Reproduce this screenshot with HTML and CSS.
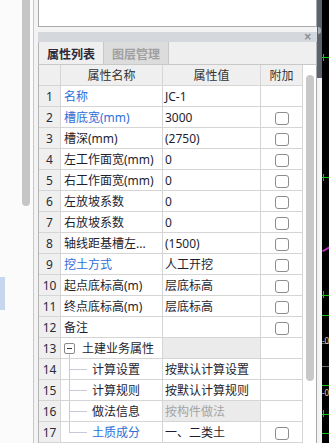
FILE: index.html
```html
<!DOCTYPE html>
<html lang="zh-CN">

<head>
  <meta charset="UTF-8">
  <meta name="viewport" content="width=device-width, initial-scale=1">
  <title>属性列表</title>
  <link rel="stylesheet" href="styles.css">
</head>

<body>

  <div class="sidebar">
    <div class="side-thumb"></div>
    <div class="side-mark"></div>
  </div>

  <div class="panel">
    <div class="preview"></div>
    <div class="titlebar"><span class="close">×</span></div>
    <div class="tabs">
      <div class="tab">属性列表</div>
      <div class="tab inactive">图层管理</div>
    </div>

    <div class="grid">
      <table class="props">
        <thead>
          <tr>
            <th class="c-num"></th>
            <th class="c-name">属性名称</th>
            <th class="c-val">属性值</th>
            <th class="c-extra">附加</th>
          </tr>
        </thead>
        <tbody>
          <tr><td class="num">1</td><td class="blue">名称</td><td class="val">JC-1</td><td class="extra"></td></tr>
          <tr><td class="num">2</td><td class="blue">槽底宽(mm)</td><td class="val">3000</td><td class="extra"><span class="check"></span></td></tr>
          <tr><td class="num">3</td><td>槽深(mm)</td><td class="val">(2750)</td><td class="extra"><span class="check"></span></td></tr>
          <tr><td class="num">4</td><td>左工作面宽(mm)</td><td class="val">0</td><td class="extra"><span class="check"></span></td></tr>
          <tr><td class="num">5</td><td>右工作面宽(mm)</td><td class="val">0</td><td class="extra"><span class="check"></span></td></tr>
          <tr><td class="num">6</td><td>左放坡系数</td><td class="val">0</td><td class="extra"><span class="check"></span></td></tr>
          <tr><td class="num">7</td><td>右放坡系数</td><td class="val">0</td><td class="extra"><span class="check"></span></td></tr>
          <tr><td class="num">8</td><td>轴线距基槽左...</td><td class="val">(1500)</td><td class="extra"><span class="check"></span></td></tr>
          <tr><td class="num">9</td><td class="blue">挖土方式</td><td class="val">人工开挖</td><td class="extra"><span class="check"></span></td></tr>
          <tr><td class="num">10</td><td>起点底标高(m)</td><td class="val">层底标高</td><td class="extra"><span class="check"></span></td></tr>
          <tr><td class="num">11</td><td>终点底标高(m)</td><td class="val">层底标高</td><td class="extra"><span class="check"></span></td></tr>
          <tr><td class="num">12</td><td>备注</td><td class="val"></td><td class="extra"><span class="check"></span></td></tr>
          <tr>
            <td class="num">13</td>
            <td class="tree"><div class="node group"><span class="toggle"><span class="minus"></span></span>土建业务属性</div></td>
            <td class="val shaded"></td>
            <td class="extra"></td>
          </tr>
          <tr>
            <td class="num">14</td>
            <td class="tree"><div class="node child">计算设置</div></td>
            <td class="val">按默认计算设置</td>
            <td class="extra"></td>
          </tr>
          <tr>
            <td class="num">15</td>
            <td class="tree"><div class="node child">计算规则</div></td>
            <td class="val">按默认计算规则</td>
            <td class="extra"></td>
          </tr>
          <tr>
            <td class="num">16</td>
            <td class="tree"><div class="node child">做法信息</div></td>
            <td class="val shaded muted">按构件做法</td>
            <td class="extra"></td>
          </tr>
          <tr>
            <td class="num">17</td>
            <td class="tree"><div class="node child last blue">土质成分</div></td>
            <td class="val">一、二类土</td>
            <td class="extra"><span class="check"></span></td>
          </tr>
        </tbody>
      </table>
      <div class="scrollbar"><div class="thumb"></div></div>
    </div>
  </div>

  <div class="splitter">
    <div class="splitter-top"><span class="grip"></span></div>
  </div>

  <!-- drawing area, only a sliver is visible -->
  <div class="canvas">
    <i class="line green l1"></i>
    <i class="tick green t1"></i>
    <i class="line green l2"></i>
    <i class="tick green t2"></i>
    <i class="slash"></i>
    <i class="line green l3"></i>
    <i class="tick green t3"></i>
    <i class="line green l4"></i>
    <i class="line gray l5"></i>
    <span class="label lb1">-0</span>
    <i class="line gray l6"></i>
    <i class="line green l7"></i>
    <span class="label lb2">-0</span>
    <i class="line green l8"></i>
    <i class="tick green t4"></i>
    <i class="line green l9"></i>
  </div>

</body>

</html>
```

FILE: styles.css
```css
* {
  box-sizing: border-box;
}

body {
  margin: 0;
  width: 329px;
  height: 443px;
  overflow: hidden;
  display: flex;
  background: #f3f3f3;
  font-family: "Noto Sans", "Noto Sans CJK SC", sans-serif;
  font-size: 12px;
  color: #1e1e30;
}

/* left list strip */
.sidebar {
  flex: none;
  width: 34px;
  background: #fbfbfb;
  border-right: 1px solid #c9c9c9;
}

.side-thumb {
  margin-left: 22px;
  width: 8px;
  height: 206px;
  background: #c6c6c6;
  border-radius: 0 0 4px 4px;
}

.side-mark {
  margin-top: 71px;
  width: 5px;
  height: 33px;
  background: #c5d6ee;
}

/* property panel */
.panel {
  flex: none;
  width: 279px;
  margin-left: 4px;
  display: flex;
  flex-direction: column;
}

.preview {
  height: 27px;
  background: #fff;
  border: 1px solid #a9a9a9;
  border-top: none;
}

.titlebar {
  margin-top: 5px;
  height: 11px;
  background: #d4d7dc;
  display: flex;
  justify-content: flex-end;
  align-items: center;
  padding-right: 5px;
}

.titlebar .close {
  font-family: "DejaVu Sans", sans-serif;
  font-size: 10px;
  line-height: 10px;
  font-weight: bold;
  color: #8a8a8a;
}

.tabs {
  height: 23px;
  display: flex;
  background: #efefef;
  border-left: 1px solid #b4b4b4;
  border-right: 1px solid #b4b4b4;
  border-bottom: 1px solid #c8c8c8;
}

.tab {
  width: 65px;
  display: flex;
  align-items: center;
  justify-content: center;
  border-right: 1px solid #c8c8c8;
  font-family: "Noto Sans CJK SC", sans-serif;
  font-weight: bold;
  color: #2a2a38;
}

.tab.inactive {
  background: #dcdcdc;
  color: #a0a0a0;
}

.grid {
  flex: 1;
  display: flex;
  align-items: flex-start;
  background: #fff;
}

/* table */
.props {
  flex: none;
  width: 265px;
  table-layout: fixed;
  border-collapse: separate;
  border-spacing: 0;
  border-left: 1px solid #b4b4b4;
}

.props th,
.props td {
  height: 21px;
  padding: 0 0 0 3px;
  border-right: 1px solid #d5d5d5;
  border-bottom: 1px solid #d5d5d5;
  white-space: nowrap;
  overflow: hidden;
  font-weight: normal;
  text-align: left;
}

.props th {
  background: #efefef;
  color: #333;
  text-align: center;
  padding: 0;
}

.c-num { width: 22px; }
.c-name { width: 102px; }
.c-val { width: 98px; }
.c-extra { width: 42px; }

.props td.num {
  background: #efefef;
  text-align: center;
  padding: 0;
  color: #2a2a3a;
}

.props td.val {
  padding-left: 2px;
}

.props td.extra {
  padding: 0;
  text-align: center;
}

.blue {
  color: #2c6fd8;
}

.shaded {
  background: #ebebeb;
}

.muted {
  color: #a4a4a4;
}

.check {
  display: inline-block;
  width: 14px;
  height: 13px;
  border: 1px solid #8c8c8c;
  border-radius: 3px;
  background: #fff;
  vertical-align: middle;
}

/* tree rows */
.props td.tree {
  padding: 0;
}

.node {
  height: 20px;
  display: flex;
  align-items: center;
  background-repeat: no-repeat;
}

.node.group {
  padding-left: 3px;
  background-image: linear-gradient(#c8c8d6, #c8c8d6);
  background-position: 8px 15px;
  background-size: 1px 5px;
}

.toggle {
  width: 11px;
  height: 11px;
  margin-right: 7px;
  border: 1px solid #8a8a8a;
  border-radius: 2px;
  display: flex;
  align-items: center;
  justify-content: center;
  background: #fff;
}

.minus {
  width: 5px;
  height: 1px;
  background: #333;
}

.node.child {
  padding-left: 31px;
  background-image: linear-gradient(#c8c8d6, #c8c8d6), linear-gradient(#c8c8d6, #c8c8d6);
  background-position: 8px 0, 8px 10px;
  background-size: 1px 20px, 18px 1px;
}

.node.child.last {
  background-size: 1px 10px, 18px 1px;
}

/* scrollbar */
.scrollbar {
  flex: none;
  width: 14px;
  height: 378px;
  padding-top: 10px;
  border-right: 1px solid #a9a9a9;
}

.thumb {
  margin-left: 3px;
  width: 8px;
  height: 306px;
  background: #c8c8c8;
  border-radius: 4px;
}

/* splitter between panel and drawing */
.splitter {
  flex: none;
  width: 5px;
  background: #f3f3f3;
}

.splitter-top {
  height: 78px;
  background: #5c636d;
  padding-top: 27px;
}

.grip {
  display: block;
  width: 3px;
  height: 7px;
  margin-left: 1px;
  background: #a9afb7;
  border-radius: 0 4px 4px 0;
}

/* drawing canvas */
.canvas {
  flex: 1;
  background: #000;
  position: relative;
  overflow: hidden;
}

.canvas i {
  position: absolute;
  display: block;
}

.line {
  left: 0;
  right: 0;
  height: 1px;
}

.tick {
  left: 1px;
  width: 1px;
  height: 7px;
}

.green { background: #19c419; }
.gray { background: #6a6a6a; }

.l1 { top: 57px; }
.t1 { top: 54px; }
.l2 { top: 177px; }
.t2 { top: 174px; }
.l3 { top: 295px; }
.t3 { top: 291px; }
.l4 { top: 315px; }
.l5 { top: 343px; }
.l6 { top: 366px; }
.l7 { top: 385px; }
.l8 { top: 414px; }
.t4 { top: 410px; }
.l9 { top: 433px; }

.slash {
  left: 0;
  top: 248px;
  width: 9px;
  height: 2px;
  background: #c030c0;
  transform: rotate(-30deg);
}

.label {
  position: absolute;
  left: 0;
  font-size: 8px;
  line-height: 8px;
  color: #ddd;
}

.lb1 { top: 337px; }
.lb2 { top: 389px; }
```
